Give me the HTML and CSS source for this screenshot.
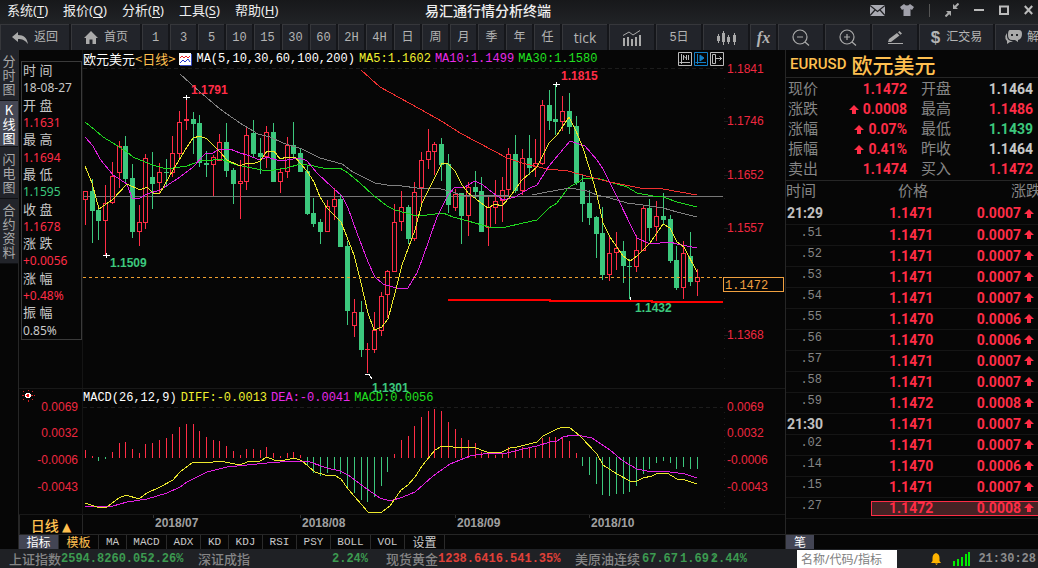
FILE: index.html
```html
<!DOCTYPE html>
<html lang="zh-CN">
<head>
<meta charset="utf-8">
<title>易汇通行情分析终端</title>
<link rel="stylesheet" href="styles.css">
</head>
<body>
<svg class="defs" aria-hidden="true">
  <symbol id="up" viewBox="0 0 10 9"><path d="M5 0L10 5H7V9H3V5H0Z" fill="currentColor"/></symbol>
</svg>
<header class="titlebar">
  <nav class="menu">
    <button>系统(<u>T</u>)</button><button>报价(<u>Q</u>)</button><button>分析(<u>R</u>)</button><button>工具(<u>S</u>)</button><button>帮助(<u>H</u>)</button>
  </nav>
  <h1 class="app-title">易汇通行情分析终端</h1>
  <div class="window-tools">
    <button aria-label="邮件"><svg width="15" height="11" viewBox="0 0 15 11"><path d="M0 0H15V11H0Z" fill="#a9aab2"/><path d="M0 .5L7.500 6.500L15 .5M0 10.500L5 5M15 10.500L10 5" fill="none" stroke="#202124" stroke-width="1.200"/></svg></button>
    <button aria-label="皮肤"><svg width="14" height="12" viewBox="0 0 14 12"><path d="M4 0Q7 3 10 0L14 3L12 6L10.500 5V12H3.500V5L2 6L0 3Z" fill="#a0a0aa"/></svg></button>
    <span class="divider"></span>
    <button aria-label="收缩"><svg width="14" height="14" viewBox="0 0 14 14"><path d="M13.500 .5L10 4" stroke="#aaa" stroke-width="2"/><path d="M.5 13.500L4 10" stroke="#aaa" stroke-width="2"/><path d="M8 1V6H13ZM1 8H6V13Z" fill="#aaa"/></svg></button>
    <button aria-label="最小化"><svg width="10" height="12" viewBox="0 0 10 12"><path d="M0 5H10V7H0Z" fill="#bbb"/></svg></button>
    <button aria-label="最大化"><svg width="10" height="10" viewBox="0 0 10 10"><path d="M1 1.500H9V9H1Z" fill="none" stroke="#bbb" stroke-width="2"/></svg></button>
    <button aria-label="关闭"><svg width="9" height="10" viewBox="0 0 9 10"><path d="M.8 1L8.200 9M8.200 1L.8 9" stroke="#bbb" stroke-width="2"/></svg></button>
  </div>
</header>
<nav class="toolbar">
  <button class="w-nav"><svg width="16" height="12" viewBox="0 0 16 12"><path d="M0 5L6 0V3C12 3 15 6 16 12C13 8 10 7 6 7V10Z" fill="#aaa"/></svg>返回</button>
  <button class="w-nav"><svg width="14" height="13" viewBox="0 0 14 13"><path d="M7 0L14 7H12V13H8.500V8.500H5.500V13H2V7H0Z" fill="#aaa"/></svg>首页</button>
  <button>1</button><button>3</button><button>5</button><button>10</button><button>15</button><button>30</button><button>60</button><button>2H</button><button>4H</button><button>日</button><button>周</button><button>月</button><button>季</button><button>年</button><button>任</button>
  <button class="w-mid tick">tick</button>
  <button class="w-mid" aria-label="指标"><svg width="20" height="16" viewBox="0 0 20 16"><path d="M1 8H3V16H1ZM5 7H7V16H5ZM9 9H11V16H9ZM13 7H15V16H13ZM17 5H19V16H17Z" fill="#aaa"/><path d="M1 5.500L7 2L11 5L18 .5" fill="none" stroke="#aaa"/></svg></button>
  <button class="w-mid">5日</button>
  <button class="w-mid" aria-label="K线"><svg width="19" height="14" viewBox="0 0 19 14"><path d="M1.500 3V12M6.500 0V14M11.500 4V13M17.500 2V14" stroke="#aaa"/><path d="M0 5H3V10H0ZM5 2H8V11H5ZM10 6H13V11H10ZM16 4H19V11H16Z" fill="#aaa"/></svg></button>
  <button class="fx">fx</button>
  <button class="w-mid" aria-label="缩小"><svg width="18" height="17" viewBox="0 0 18 17" fill="none" stroke="#aaa" stroke-width="1.200"><circle cx="8" cy="8" r="7"/><path d="M5 8H11M13 13L17 16.500"/></svg></button>
  <button class="w-mid" aria-label="放大"><svg width="18" height="17" viewBox="0 0 18 17" fill="none" stroke="#aaa" stroke-width="1.200"><circle cx="8" cy="8" r="7"/><path d="M5 8H11M8 5V11M13 13L17 16.500"/></svg></button>
  <button class="w-mid" aria-label="画线"><svg width="16" height="13" viewBox="0 0 16 13"><path d="M1 11L2 8L10 2L12.500 4.500L4 11ZM11 1.200L12.500 0L15 2.500L13.500 3.800ZM1 12H16V13H1Z" fill="#aaa"/></svg></button>
  <button class="w-trade"><b>$</b>汇交易</button>
  <button class="w-last"><svg width="17" height="15" viewBox="0 0 17 15"><path d="M5 0H14Q17 0 17 4Q17 9 13 10V12L10 10H7Q3 10 3 5Q3 0 5 0Z" fill="#aaa"/><path d="M2 3Q0 5 .5 9L2 11V14L5 12H8L6 11Q2 10 2 6Z" fill="#aaa"/><path d="M6 4H8V6H6ZM11 4H13V6H11Z" fill="#24262a"/></svg>解</button>
</nav>

<main class="workspace">
  <nav class="side-tabs">
    <button class="t1">分时图</button><button class="t2 active">K线图</button><button class="t3">闪电图</button><button class="t4">合约资料</button>
  </nav>

  <section class="charts">
    <div class="panel price-panel">
      <dl class="info">
        <dt>时 间</dt><dd>18-08-27</dd>
        <dt>开 盘</dt><dd class="up">1.1631</dd>
        <dt>最 高</dt><dd class="up">1.1694</dd>
        <dt>最 低</dt><dd class="down">1.1595</dd>
        <dt>收 盘</dt><dd class="up">1.1678</dd>
        <dt>涨 跌</dt><dd class="up">+0.0056</dd>
        <dt>涨 幅</dt><dd class="up">+0.48%</dd>
        <dt>振 幅</dt><dd>0.85%</dd>
      </dl>
      <div class="plot">
        <div class="legend">
          <span class="name">欧元美元<em>&lt;日线&gt;</em></span>
          <svg width="13" height="13" viewBox="0 0 13 13"><path d="M0 0H12V12H0Z" fill="#fff"/><path d="M12.500 1V12.500H1" stroke="#3548c0" fill="none"/><path d="M1 5L3 3L5 5L7 3L9 5L11 3" stroke="#e22" fill="none"/><path d="M1 10L4 7L6 9L9 6L11 9" stroke="#23c" fill="none"/></svg>
          <span>MA(5,10,30,60,100,200)</span>
          <span class="c-yellow">MA5:1.1602</span>
          <span class="c-magenta">MA10:1.1499</span>
          <span class="c-green">MA30:1.1580</span>
          <span class="axis-tools">
            <button aria-label="左侧坐标"><svg width="14" height="14" viewBox="0 0 14 14" fill="none" stroke="#bbb"><path d="M.5 .5H13.500V13.500H.5ZM3.500 2V12M1.500 10.500H12M5.500 3V8M8.500 3V8M10.500 3V8M5.500 4L9 7"/></svg></button>
            <button aria-label="播放"><svg width="14" height="14" viewBox="0 0 14 14" fill="none" stroke="#1380c8"><path d="M.5 .5H13.500V13.500H.5ZM3.500 2V12M1.500 10.500H12"/><path d="M6 3L10 6L6 9Z" fill="#1380c8"/></svg></button>
            <button aria-label="右移"><svg width="14" height="14" viewBox="0 0 14 14" fill="none" stroke="#bbb"><path d="M.5 .5H13.500V13.500H.5ZM2.500 2.500H5.500V11.500H2.500ZM6 6.500H12M9.500 4.500L11.500 6.500L9.500 8.500"/></svg></button>
          </span>
        </div>
        <svg class="canvas" viewBox="83 68 702 320">
          <path class="faint" d="M83 68.500H723" stroke-dasharray="4 3"/>
          <path class="faint" d="M724.500 78V388" stroke-dasharray="1 9"/>
          <path class="faint" d="M724 121.500H728M724 175.500H728M724 228.500H728M724 335.500H728"/>
          <path d="M83 196.500H723" stroke="#777"/>
          <g id="candles"></g>
          <g id="price-lines"></g>
          <path d="M83 277.500H785" stroke="#f0a030" stroke-dasharray="3 3"/>
          <path d="M448 300H550V301H652V302H723" stroke="#f00" stroke-width="2" fill="none"/>
          <path d="M183 97.500H190M186.500 95V100M103 255.500H110M106.500 253V258M553 84.500H560M556.500 82V87M630.500 297V300M365 374.500H369L372 379" stroke="#fff" fill="none"/>
          <g class="mark up"><text x="191" y="94">1.1791</text><text x="561" y="80">1.1815</text></g>
          <g class="mark down"><text x="110" y="267">1.1509</text><text x="635" y="312">1.1432</text><text x="372" y="392">1.1301</text></g>
          <g class="axis"><text x="727" y="73">1.1841</text><text x="727" y="125">1.1746</text><text x="727" y="179">1.1652</text><text x="727" y="232">1.1557</text><text x="727" y="339">1.1368</text></g>
          <path d="M723.500 277.500H783.500V291.500H723.500Z" fill="#060606" stroke="#f0a040"/>
          <text class="last" x="725" y="289">1.1472</text>
        </svg>
      </div>
    </div>
    <div class="panel macd-panel">
      <svg class="canvas gutter" viewBox="19 389 64 125">
        <g stroke="#c22" stroke-dasharray="2 1"><path d="M22 395.500H25M31 395.500H35M28 389.500V391M28 400V402M23 391L25 393M33 391L31 393M23 400L25 398M33 400L31 398"/></g>
        <circle cx="28" cy="395.500" r="3" fill="#fff"/><circle cx="28" cy="395.500" r="1.500" fill="#e11"/>
        <g class="axis" text-anchor="end"><text x="78" y="411">0.0069</text><text x="78" y="437">0.0032</text><text x="78" y="464">-0.0006</text><text x="78" y="491">-0.0043</text></g>
      </svg>
      <div class="plot">
        <div class="legend">
          <span>MACD(26,12,9)</span>
          <span class="c-yellow">DIFF:-0.0013</span>
          <span class="c-magenta">DEA:-0.0041</span>
          <span class="c-green">MACD:0.0056</span>
        </div>
        <svg class="canvas" viewBox="83 407 702 107">
          <path class="faint" d="M83 407.500H723" stroke-dasharray="4 3"/>
          <path class="faint" d="M724.500 412V514" stroke-dasharray="1 5"/>
          <g id="bars"></g>
          <g id="macd-lines"></g>
          <g class="axis"><text x="727" y="411">0.0069</text><text x="727" y="437">0.0032</text><text x="727" y="464">-0.0006</text><text x="727" y="491">-0.0043</text></g>
        </svg>
      </div>
    </div>
    <div class="panel date-panel">
      <button class="period">日线 <i>▲</i></button>
      <svg class="canvas" viewBox="83 515 702 19">
        <path d="M153.500 515V518M300.500 515V518M455.500 515V518M589.500 515V518" stroke="#333"/>
        <g class="date"><text x="155" y="527">2018/07</text><text x="302" y="527">2018/08</text><text x="457" y="527">2018/09</text><text x="591" y="527">2018/10</text></g>
      </svg>
    </div>
    <nav class="indicators">
      <button class="active cjk">指标</button><button class="gold cjk">模板</button><button class="s">MA</button><button class="l">MACD</button><button>ADX</button><button class="s">KD</button><button>KDJ</button><button>RSI</button><button>PSY</button><button class="l">BOLL</button><button>VOL</button><button class="cjk">设置</button>
    </nav>
  </section>

  <aside class="quote">
    <h2><span>EURUSD</span>欧元美元</h2>
    <dl class="facts">
      <dt>现价</dt><dd class="up">1.1472</dd><dt>开盘</dt><dd>1.1464</dd>
      <dt>涨跌</dt><dd class="up"><svg class="arrow"><use href="#up"/></svg>0.0008</dd><dt>最高</dt><dd class="up">1.1486</dd>
      <dt>涨幅</dt><dd class="up"><svg class="arrow"><use href="#up"/></svg>0.07%</dd><dt>最低</dt><dd class="down">1.1439</dd>
      <dt>振幅</dt><dd class="up"><svg class="arrow"><use href="#up"/></svg>0.41%</dd><dt>昨收</dt><dd>1.1464</dd>
      <dt>卖出</dt><dd class="up">1.1474</dd><dt>买入</dt><dd class="up">1.1472</dd>
    </dl>
    <table class="ticks">
      <thead><tr><th class="time">时间</th><th class="price">价格</th><th class="change">涨跌</th></tr></thead>
      <tbody id="ticks"></tbody>
    </table>
    <div class="quote-tabs"><button class="active">笔</button></div>
  </aside>
</main>

<footer class="status">
  <div class="item i1"><span>上证指数</span><b class="down">2594.82</b><b class="down">60.05</b><b class="down pct">2.26%<i>↓</i></b></div>
  <div class="item i2"><span>深证成指</span><b class="down push">2.24%</b></div>
  <div class="item i3"><span>现货黄金</span><b class="up">1238.64</b><b class="up">16.54</b><b class="up pct">1.35%<i>↑</i></b></div>
  <div class="item i4"><span>美原油连续</span><b class="down">67.67</b><b class="down">1.69</b><b class="down pct">2.44%<i>↑</i></b></div>
  <input type="text" aria-label="搜索" placeholder="名称/代码/指标">
  <div class="tray">
    <svg width="10" height="12" viewBox="0 0 10 12"><path d="M5 0Q8.500 1 8.500 5V8L10 10H0L1.500 8V5Q1.500 1 5 0ZM4 10.500H7L5.500 12Z" fill="#ffb400"/></svg>
    <svg width="18" height="14" viewBox="0 0 18 14"><path d="M0 9H2V14H0ZM4 7H6V14H4ZM8 5H10V14H8ZM12 2H14V14H12ZM15 0H17V14H15Z" fill="#0e0"/></svg>
    <time>21:30:28</time>
  </div>
</footer>
<script src="chart.js"></script>
</body>
</html>
```
FILE: styles.css
```css
* { box-sizing: border-box; }
:root {
  --bg: #060606;
  --line: #262626;
  --red: #ff2d46;
  --green: #3cc87d;
  --gold: #ffc050;
  --cjk: "Noto Sans CJK SC", sans-serif;
  --mono: "Liberation Mono", "Noto Sans CJK SC", monospace;
}
body {
  margin: 0;
  height: 100vh;
  display: flex;
  flex-direction: column;
  overflow: hidden;
  background: var(--bg);
  color: #c8c8c8;
  font: 12px/14px "Liberation Sans", var(--cjk);
}
button { margin: 0; padding: 0; border: 0; background: none; color: inherit; font: inherit; white-space: nowrap; }
svg { display: block; flex: none; }
dl, dd, h1, h2 { margin: 0; }
.defs { position: absolute; width: 0; height: 0; }
.up { color: var(--red); }
.down { color: var(--green); }
.c-yellow { color: #f0f030; }
.c-magenta { color: #e82ae8; }
.c-green { color: #20e020; }

.titlebar {
  display: grid;
  grid-template-columns: 1fr auto 1fr;
  align-items: center;
  height: 24px;
  flex: none;
  padding: 0 5px 4px 7px;
  background: linear-gradient(#17181a, #212326);
}
.menu { display: flex; gap: 15px; color: #eee; font: 13px/18px "Noto Sans", var(--cjk); }
.menu u { text-underline-offset: 2px; }
.app-title { padding-right: 64px; color: #eee; font: 500 14px/18px var(--cjk); }
.window-tools { display: flex; align-items: center; justify-content: flex-end; gap: 15px; }
.divider { width: 1px; height: 13px; background: #555; }

.toolbar { display: flex; gap: 2px; height: 26px; flex: none; overflow: hidden; background: #15161a; }
.toolbar button {
  display: flex;
  align-items: center;
  justify-content: center;
  gap: 6px;
  flex: none;
  width: 26px;
  border: 1px solid #36373b;
  border-width: 1px 0 0 1px;
  background: #22242a;
  color: #b4b4b4;
  font: 12px/14px var(--mono);
}
.toolbar .w-nav { width: 69px; }
.toolbar .w-mid { width: 45px; }
.toolbar .w-trade { width: 74px; }
.toolbar .w-trade b { font: bold 17px/17px "Liberation Sans"; }
.toolbar .w-last { width: 60px; gap: 5px; justify-content: flex-start; padding-left: 9px; }
.toolbar .tick { font: 14px/16px "Open Sans"; }
.toolbar .fx { font: italic bold 16px/16px "Liberation Serif"; }

.workspace { display: flex; flex: 1; min-height: 0; }
.side-tabs { display: flex; flex-direction: column; flex: none; width: 19px; border-right: 1px solid var(--line); }
.side-tabs button {
  padding: 0 2px;
  border-bottom: 1px solid #101114;
  background: #22242a;
  color: #a8a8a8;
  font: 13px/14px var(--cjk);
  white-space: normal;
  word-break: break-all;
}
.side-tabs .t1 { height: 51px; }
.side-tabs .t2 { height: 46px; }
.side-tabs .t3 { height: 52px; }
.side-tabs .t4 { height: 65px; }
.side-tabs .active { background: #454754; color: #fff; }

.charts { display: flex; flex-direction: column; flex: 1; min-width: 0; }
.panel { display: grid; grid-template-columns: 64px 1fr; border-bottom: 1px solid #181818; }
.info {
  align-self: start;
  display: grid;
  grid-template-rows: repeat(16, 1fr);
  height: 279px;
  margin: 11px 1px 0 2px;
  padding: 0 1px;
  border: 1px solid #3a3a3a;
  font: 12px/17px "Noto Sans", var(--cjk);
}
.info dt { font-size: 13px; }
.plot { border-left: 1px solid #141414; margin-left: -1px; }
.legend { display: flex; align-items: center; gap: 4px; height: 18px; font: 12px/16px var(--mono); color: #fff; white-space: nowrap; }
.legend .name { font: 13px/16px var(--cjk); }
.legend em { color: var(--gold); font-style: normal; }
.legend span + span { flex: none; }
.axis-tools { display: flex; gap: 2px; margin: 0 61px 0 auto; }
.canvas { width: 100%; overflow: visible; shape-rendering: crispEdges; }
.canvas text { font: 12px "Liberation Sans"; }
.canvas .mark text, .canvas .date text { font-weight: bold; fill: currentColor; }
.canvas .date { color: #a0a0a0; }
.axis text { fill: #ee2840; }
.canvas .last { font-family: "Liberation Mono"; fill: #f0a040; }
.faint { stroke: #1c1c1c; fill: none; }
.date-panel { border-bottom-color: var(--line); }
.period { border: 1px solid var(--line); border-width: 0 1px; color: var(--gold); font: 500 14px/18px var(--cjk); }
.period i { font: 12px/14px "DejaVu Sans"; }

.indicators { display: flex; flex: 1; border-bottom: 1px solid #1a1a1a; }
.indicators button { width: 34px; border-right: 1px solid #2a2a2a; font: 11px/14px var(--mono); }
.indicators .s { width: 28px; }
.indicators .l { width: 40px; }
.indicators .cjk { width: 40px; font: 12px/14px var(--cjk); }
.indicators .gold { color: var(--gold); }
.active { background: #434554; color: #fff; }

.quote { display: flex; flex-direction: column; flex: none; width: 253px; border-left: 1px solid var(--line); overflow: hidden; }
.quote h2 { display: flex; align-items: center; gap: 5px; height: 28px; padding-left: 4px; border-bottom: 1px solid var(--line); color: var(--gold); font: 500 21px/24px var(--cjk); }
.quote h2 span { font: 500 15px/18px Roboto; }
.facts {
  display: grid;
  grid-template-columns: 32px 87px 44px 82px;
  grid-auto-rows: 20px;
  height: 103px;
  padding-left: 2px;
  border-bottom: 1px solid var(--line);
}
.facts dt, .ticks th { color: #858585; font: 15px/20px var(--cjk); }
.facts dt:nth-of-type(even) { padding-left: 14px; }
.facts dd { display: flex; justify-content: flex-end; align-items: center; gap: 4px; font: bold 14px/20px Roboto; padding-top: 2px; }
.arrow { width: 10px; height: 9px; }
.ticks { border-collapse: collapse; table-layout: fixed; width: 252px; color: var(--red); font: bold 14px/18px Roboto; }
.ticks th { height: 22px; text-align: left; vertical-align: top; padding: 0; line-height: 18px; }
.ticks td { height: 21px; padding: 0; }
.ticks tbody tr { border-bottom: 1px solid #151515; }
.ticks .time { width: 85px; }
.ticks .price { width: 100px; }
.ticks th.price { padding-left: 27px; }
.ticks th.change { padding-left: 40px; white-space: nowrap; }
.ticks td.time { padding: 0 49px 3px 0; text-align: right; color: #858585; font: 12px/14px "Liberation Mono"; }
.ticks td.major { color: #c0c0c0; padding: 0 48px 0 0; font: bold 14px/18px Roboto; }
.ticks td.price { padding-left: 18px; }
.ticks .move { display: flex; align-items: center; justify-content: flex-end; gap: 3px; padding-right: 4px; }
.ticks .current td.price, .ticks .current td.change {
  background:
    linear-gradient(#452224, #452224) 0 4px / 100% 13px no-repeat,
    linear-gradient(var(--red), var(--red)) 0 3px / 100% 15px no-repeat;
}
.ticks .current td.price { background-position: 1px 4px, 0 3px; }
.quote-tabs { margin-top: auto; height: 15px; border-top: 1px solid var(--line); display: flex; }
.quote-tabs button { width: 28px; font: 12px/14px var(--cjk); }

.status { display: flex; align-items: center; flex: none; height: 19px; padding-left: 9px; background: #1f2125; overflow: hidden; }
.item { display: flex; flex: none; align-items: center; color: #858585; font: 500 13px/18px var(--cjk); }
.item b { font: bold 12px/16px "Liberation Mono"; }
.item .down { color: #3c9a50; }
.item .up { color: #e04038; }
.pct { position: relative; }
.pct i { position: absolute; left: 0; top: 0; font-style: normal; }
.i1 { width: 189px; }
.i2 { width: 188px; }
.i3 { width: 189px; }
.i4 { width: 222px; gap: 2px; }
.push { margin: 0 18px 0 auto; }
.status input { width: 100px; height: 18px; align-self: flex-end; padding: 0 4px; border: 0; background: #fff; font: 12px/16px "Noto Sans", var(--cjk); }
.status input::placeholder { color: #808080; }
.tray { display: flex; align-items: center; gap: 12px; margin: 0 2px 0 auto; }
.tray time { margin-left: -5px; color: #8c8c8c; font: bold 12px/16px "Liberation Mono"; }
```
FILE: chart.js
```javascript
// Candles: direction, high, body top, body bottom, low (canvas units).
const candles = `r191,191,200,225 g179,191,211,243 g205,210,221,240 r185,203,221,255 r162,176,203,204 r141,146,173,188 g136,146,179,184 g164,178,232,238 r205,222,232,246 r154,158,223,229
g152,177,184,209 r163,172,183,193 g159,172,173,187 r136,153,173,177 r111,122,154,160 r97,119,121,130 g112,119,124,154 g115,123,163,167 g151,163,165,177 r155,157,165,196
r134,142,161,161 g123,142,171,177 g168,170,184,204 r160,181,184,219 r126,135,182,190 g120,133,154,157 g138,153,157,174 r126,132,157,168 g123,132,182,182 r168,172,182,193
r137,145,172,178 g122,145,154,157 g149,153,172,172 g166,171,214,215 g198,213,224,227 g219,222,232,244 r200,206,232,232 r188,199,207,220 g194,199,247,247 g241,246,311,325
r299,312,326,337 g301,312,350,357 r343,349,350,373 r312,330,350,353 r292,296,331,336 r270,271,295,318 r204,222,272,272 r191,207,222,231 g205,207,239,244 r182,192,239,241
r152,160,188,205 r129,151,160,169 r142,144,152,175 g138,144,165,181 g154,164,205,213 r189,194,208,211 g193,193,216,244 r182,187,216,236 g171,187,192,198 g177,191,232,232
r197,207,228,246 r180,201,208,224 r177,190,201,222 r148,154,190,195 g135,154,191,193 r149,158,191,195 g135,158,168,175 r139,163,167,177 r100,105,164,165 g90,105,121,130
g84,119,122,135 r96,111,122,131 g93,111,127,134 g116,126,183,185 g175,182,204,222 g190,203,218,225 g216,217,234,258 g207,233,275,280 r237,253,275,281 r232,248,253,270
g241,251,266,283 g259,266,267,299 r235,250,267,272 r206,208,251,251 g199,208,228,241 r201,216,227,241 g193,216,220,225 g215,219,261,263 g246,260,288,290 r241,253,288,299
g232,256,282,286 r269,277,282,296`.split(/\s+/);

// End of each MACD bar; the zero line is at 458.
const bars = [450,456,461,459,452,443,442,449,453,444,443,440,438,434,427,424,424,431,437,440,441,446,451,455,449,449,450,447,453,456,453,452,455,
466,473,476,473,470,474,487,493,500,502,497,486,472,454,440,436,426,417,411,409,411,422,429,438,440,443,452,453,455,453,447,449,447,448,448,438,437,437,437,441,453,
466,475,484,495,496,494,494,492,486,474,469,463,461,463,469,467,469,469];

const priceLines = {
  '#20d820': '85,122 95,130 103,137 113,143 127,152 133,157 140,160 153,165 163,168 173,168 187,166 200,161 213,160 220,159 237,165 247,167 267,171 287,168 300,164 314,166 327,169 340,168 348,173 360,183 373,195 387,206 395,210 417,216 427,215 443,213 453,217 468,221 489,227 502,228 523,223 537,220 549,208 557,203 568,188 583,179 597,178 610,182 627,187 637,193 653,196 663,197 677,202 697,207',
  '#808080': '180,74 200,92 220,109 227,114 240,123 258,134 270,137 283,143 302,149 320,158 342,164 353,172 375,183 387,185 402,186 417,188 437,188 453,192 463,196 510,195 532,195 547,192 570,188 587,191 597,195 610,198 627,203 643,205 663,208 677,212 697,217',
  '#f03030': '361,70 380,87 420,109 443,122 460,133 477,142 507,158 522,163 547,169 568,171 590,177 610,182 640,188 663,189 697,195',
  '#e020e0': '85,137 93,146 100,159 113,175 127,184 132,198 140,198 147,194 160,190 180,177 193,167 205,154 213,153 218,150 230,149 240,153 247,155 260,160 267,157 280,161 300,158 307,161 317,173 333,188 342,196 348,208 357,233 368,262 375,277 383,284 400,289 408,288 417,273 422,260 437,217 448,195 455,187 465,187 475,181 483,185 493,193 503,200 515,197 530,188 537,185 549,166 570,141 585,146 597,160 603,169 615,193 637,238 650,244 670,242 677,244 697,248',
  '#ece82c': '85,166 92,183 99,209 112,200 127,184 140,190 147,187 154,194 160,193 173,170 187,147 193,138 200,136 207,139 220,152 227,160 240,166 247,163 253,164 260,161 267,151 274,151 280,159 287,157 295,157 307,171 314,182 320,197 327,208 341,222 347,237 354,255 361,283 368,313 374,330 382,327 388,319 395,293 402,265 415,230 422,203 435,177 442,163 448,164 455,171 462,185 468,193 488,208 495,204 502,206 509,198 522,180 537,167 542,157 549,143 557,135 569,117 576,131 583,148 590,170 597,195 603,223 610,237 623,256 630,261 637,256 650,243 663,224 670,228 677,242 684,247 697,272'
};
const macdLines = {
  '#e020e0': '85,506 113,506 127,502 147,499 167,493 180,487 187,482 207,472 227,467 247,465 267,463 293,461 307,461 327,468 340,471 348,475 367,489 380,498 390,501 403,497 415,492 433,476 450,464 470,456 483,454 507,453 523,449 537,446 550,442 557,441 563,437 572,435 582,436 592,438 610,450 623,461 637,469 647,471 670,472 685,474 697,478',
  '#ece82c': '85,503 100,508 107,507 119,498 126,495 139,499 147,493 160,487 173,480 180,472 193,462 207,463 220,461 240,465 247,462 260,461 267,457 274,460 280,461 295,458 302,461 315,472 325,475 334,475 341,479 348,489 368,512 375,513 382,512 390,506 401,490 408,485 415,477 422,466 435,450 442,446 463,448 473,447 487,452 502,452 510,448 517,447 537,442 543,436 557,429 563,427 569,427 580,436 597,454 603,465 617,474 630,481 637,481 643,478 652,476 658,473 667,473 677,479 685,480 697,484'
};

const xAt = i => Math.floor(85.5 + 6.72 * i);
const byId = id => document.getElementById(id);

byId('candles').innerHTML = candles.map((c, i) => {
  const [high, top, bottom, low] = c.slice(1).split(',').map(Number);
  const x = xAt(i);
  const rise = c[0] === 'r';
  const color = rise ? '#ff2d46' : '#3cc87d';
  const wicks = `<path d="M${x + .5} ${high}V${top}M${x + .5} ${bottom}V${low}" stroke="${color}"/>`;
  const body = rise && bottom - top > 1
    ? `<rect x="${x - 1.5}" y="${top + .5}" width="4" height="${bottom - top - 1}" fill="none" stroke="${color}"/>`
    : `<rect x="${x - 2}" y="${top}" width="5" height="${bottom - top}" fill="${color}"/>`;
  return wicks + body;
}).join('');

byId('bars').innerHTML = bars.map((end, i) =>
  `<path d="M${xAt(i) + .5} ${end < 458 ? 458 : 457}V${end}" stroke="${end < 458 ? '#ff2d46' : '#3cc87d'}"/>`).join('');

const drawLines = lines => Object.entries(lines).map(([color, points]) =>
  `<polyline points="${points}" fill="none" stroke="${color}"/>`).join('');
byId('price-lines').innerHTML = drawLines(priceLines);
byId('macd-lines').innerHTML = drawLines(macdLines);

const ticks = [['21:29', 1, 7], ['.51', 1, 7], ['.52', 1, 7], ['.53', 1, 7], ['.54', 1, 7], ['.55', 0, 6], ['.56', 0, 6], ['.57', 1, 7],
  ['.58', 1, 7], ['.59', 2, 8], ['21:30', 1, 7], ['.02', 1, 7], ['.14', 0, 6], ['.15', 1, 7], ['.27', 2, 8]];
byId('ticks').innerHTML = ticks.map(([time, price, change], i) =>
  `<tr${i === ticks.length - 1 ? ' class="current"' : ''}><td class="time${time.includes(':') ? ' major' : ''}">${time}</td>` +
  `<td class="price">1.147${price}</td><td class="change"><span class="move">0.000${change}<svg class="arrow"><use href="#up"/></svg></span></td></tr>`).join('');
```
